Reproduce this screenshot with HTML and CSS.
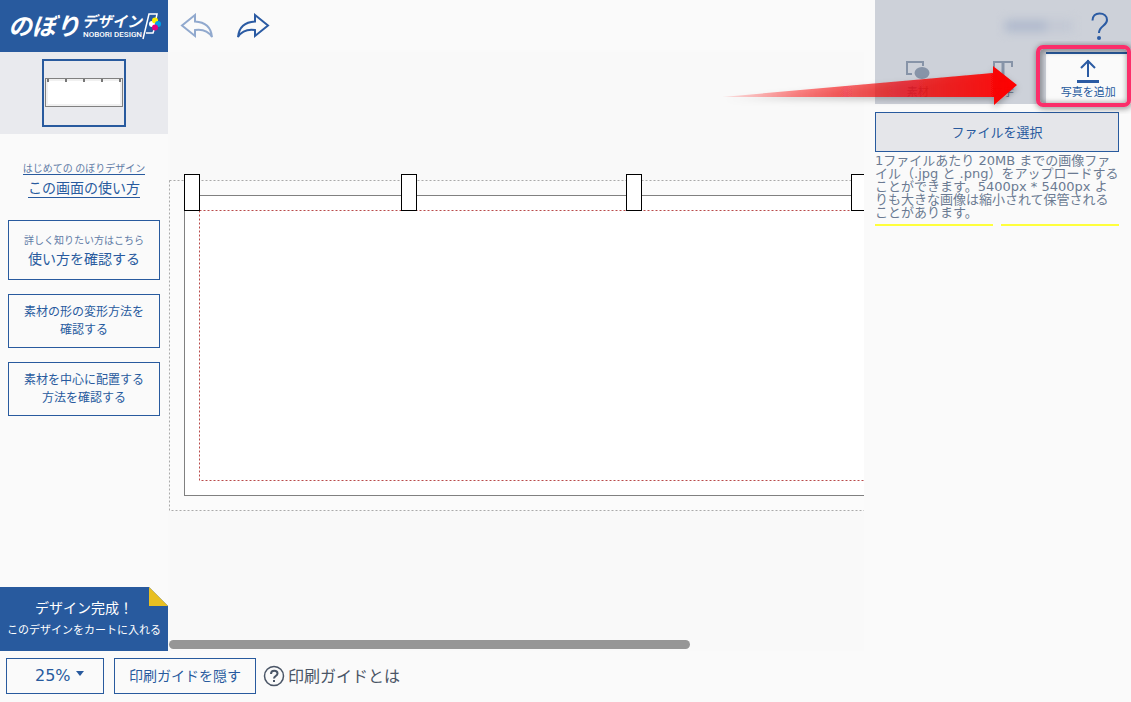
FILE: index.html
```html
<!DOCTYPE html>
<html lang="ja">
<head>
    <meta charset="UTF-8">
    <meta name="viewport" content="width=device-width, initial-scale=1.0">
    <title>のぼりデザイン</title>
    <link rel="stylesheet" href="styles.css">
</head>
<body>

    <!-- Left column -->
    <aside class="sidebar">
        <h1 class="logo">
            <span class="logo-main">のぼり</span>
            <span class="logo-side">
                <span class="logo-sub">デザイン</span>
                <span class="logo-en">NOBORI DESIGN</span>
            </span>
            <svg class="logo-flag" width="20" height="28" viewBox="0 0 20 28">
                <path d="M1 27 L7 2 H15 L14 7 M4 21 H11 L12 18" fill="none" stroke="#fff" stroke-width="1.500"/>
                <circle cx="10" cy="12" r="3" fill="#fff"/>
                <circle cx="13" cy="8.500" r="3" fill="#fff100"/>
                <circle cx="16" cy="12" r="3" fill="#00a0e9"/>
                <circle cx="13" cy="15.500" r="3" fill="#e4007f"/>
            </svg>
        </h1>

        <div class="thumb-area">
            <button class="thumb" aria-label="デザイン 1">
                <svg width="80" height="32" viewBox="0 0 80 32">
                    <rect x="1.500" y="1.500" width="77" height="28" fill="#fff" stroke="#808080"/>
                    <rect x="3" y="3" width="74" height="25" fill="none" stroke="#f0f0f0" stroke-width="2"/>
                    <path d="M4 2v3M22 2v3M40 2v3M58 2v3M76 2v3" stroke="#777" stroke-width="2"/>
                </svg>
            </button>
        </div>

        <a class="guide-link" href="#">
            <span class="small">はじめての のぼりデザイン</span>
            <span class="large">この画面の使い方</span>
        </a>

        <nav class="help-links">
            <a class="help-box" href="#">
                <span class="small">詳しく知りたい方はこちら</span>
                <span class="large">使い方を確認する</span>
            </a>
            <a class="help-box" href="#">素材の形の変形方法を<br>確認する</a>
            <a class="help-box" href="#">素材を中心に配置する<br>方法を確認する</a>
        </nav>

        <button class="complete-button">
            <span class="complete-title">デザイン完成！</span>
            <span class="complete-note">このデザインをカートに入れる</span>
        </button>
    </aside>

    <!-- Drawing area -->
    <main class="editor">
        <div class="toolbar">
            <button class="icon-button undo" aria-label="元に戻す">
                <svg width="34" height="26" viewBox="0 0 34 26">
                    <path d="M15 2 L2 12.500 L15 23 V17 C22 16 28 17.500 32 24 C31 14 25 9 15 8.500 Z" fill="none" stroke="#2b5ba3" stroke-width="2"/>
                </svg>
            </button>
            <button class="icon-button" aria-label="やり直す">
                <svg width="34" height="26" viewBox="0 0 34 26">
                    <path d="M19 2 L32 12.500 L19 23 V17 C12 16 6 17.500 2 24 C3 14 9 9 19 8.500 Z" fill="none" stroke="#2b5ba3" stroke-width="2"/>
                </svg>
            </button>
        </div>
        <div class="canvas">
            <svg width="920" height="480" viewBox="0 0 920 480">
                <rect x="1.500" y="128.500" width="915" height="330" fill="#fbfbfb" stroke="#aaa" stroke-dasharray="2 2"/>
                <rect x="16.500" y="143.500" width="885" height="300" fill="#fff" stroke="#808080"/>
                <rect x="31.500" y="158.500" width="855" height="270" fill="none" stroke="#b94a4a" stroke-dasharray="2 2"/>
                <g fill="#fff" stroke="#000">
                    <rect x="16.500" y="122.500" width="15" height="36"/>
                    <rect x="233.500" y="122.500" width="15" height="36"/>
                    <rect x="458.500" y="122.500" width="15" height="36"/>
                    <rect x="683.500" y="122.500" width="15" height="36"/>
                </g>
            </svg>
        </div>
        <div class="scroll-track"><div class="scroll-thumb"></div></div>
    </main>

    <!-- Right column -->
    <aside class="panel">
        <header class="panel-header">
            <div class="account">
                <span class="user-name"></span>
                <a class="help-icon" href="#" aria-label="ヘルプ">
                    <svg width="18" height="30" viewBox="0 0 18 30">
                        <path d="M1.500 9.500 C1.500 5 4.500 2.500 8.500 2.500 C13 2.500 16 5 16 9 C16 15 8 14.500 8 22" fill="none" stroke="#2b5ba3" stroke-width="2"/>
                        <circle cx="8" cy="27" r="2" fill="#2b5ba3"/>
                    </svg>
                </a>
            </div>
            <div class="tabs">
                <button class="tab">
                    <svg width="24" height="22" viewBox="0 0 24 22">
                        <path d="M6 14 H1 V2 H17 V6" fill="none" stroke="#8794a8" stroke-width="2"/>
                        <ellipse cx="16" cy="13" rx="7.500" ry="6" fill="#8794a8"/>
                    </svg>
                    <span>素材</span>
                </button>
                <button class="tab">
                    <svg width="24" height="22" viewBox="0 0 24 22">
                        <path d="M3 7 V2 H21 V7 M8 21 H16" fill="none" stroke="#8794a8" stroke-width="2"/>
                        <path d="M12 2 V21" fill="none" stroke="#8794a8" stroke-width="3"/>
                    </svg>
                    <span>文字</span>
                </button>
                <button class="tab active">
                    <svg width="24" height="26" viewBox="0 0 24 26">
                        <path d="M12 19 V2 M5 10 L12 3 L19 10" fill="none" stroke="#2b5ba3" stroke-width="2"/>
                        <rect x="1" y="22" width="22" height="3" fill="#2b5ba3"/>
                    </svg>
                    <span>写真を追加</span>
                </button>
            </div>
        </header>

        <div class="upload">
            <button class="file-button">ファイルを選択</button>
            <p class="upload-note">1ファイルあたり 20MB までの画像ファイル（.jpg と .png）をアップロードすることができます。5400px * 5400px よりも大きな画像は縮小されて保管されることがあります。</p>
            <div class="photo-columns"><span></span><span></span></div>
        </div>

        <!-- Callout over the upload tab -->
        <svg class="callout" width="416" height="124" viewBox="0 0 416 124">
            <defs>
                <linearGradient id="arrow-fill" x1="0" x2="1" y1="0" y2="0">
                    <stop offset="0" stop-color="#f00" stop-opacity="0.100"/>
                    <stop offset="0.250" stop-color="#f00" stop-opacity="0.450"/>
                    <stop offset="0.600" stop-color="#e91418" stop-opacity="0.780"/>
                    <stop offset="0.900" stop-color="#f80808" stop-opacity="0.960"/>
                    <stop offset="1" stop-color="#f00"/>
                </linearGradient>
                <filter id="arrow-shadow" x="-5%" y="-20%" width="110%" height="160%">
                    <feDropShadow dx="0" dy="3" stdDeviation="3" flood-color="#000" flood-opacity="0.300"/>
                </filter>
                <filter id="frame-shadow" x="-10%" y="-10%" width="120%" height="125%">
                    <feDropShadow dx="1" dy="1" stdDeviation="3" flood-color="#000" flood-opacity="0.600"/>
                </filter>
            </defs>
            <path d="M7 97 L278 73 V66 L302 85 L279 105 V97 Z" fill="url(#arrow-fill)" filter="url(#arrow-shadow)"/>
            <rect x="323" y="47" width="91" height="58" rx="5" fill="none" stroke="#fb2d6b" stroke-width="4" filter="url(#frame-shadow)"/>
        </svg>
    </aside>

    <!-- Bottom bar -->
    <footer class="bottom-bar">
        <label class="zoom">
            <select aria-label="表示倍率">
                <option>25%</option>
                <option>50%</option>
                <option>100%</option>
            </select>
        </label>
        <button class="guide-toggle">印刷ガイドを隠す</button>
        <a class="guide-about" href="#">
            <svg width="22" height="22" viewBox="0 0 22 22">
                <circle cx="11" cy="11" r="9.500" fill="none" stroke="#4a5566" stroke-width="1.500"/>
                <path d="M8 9 C8 4.500 14.500 5 14.500 8.500 C14.500 11 11 11 11 13.500" fill="none" stroke="#4a5566" stroke-width="2"/>
                <rect x="10" y="15" width="2" height="2" fill="#4a5566"/>
            </svg>
            <span>印刷ガイドとは</span>
        </a>
    </footer>

</body>
</html>
```
FILE: styles.css
```css
/* Page grid */
* {
    box-sizing: border-box;
}

body {
    margin: 0;
    height: 100vh;
    overflow: hidden;
    display: grid;
    grid-template-columns: 168px 1fr 256px;
    grid-template-rows: 1fr 51px;
    background-color: #fafafa;
    color: #285a9e;
    font-family: "Noto Sans", "Noto Sans CJK JP", sans-serif;
}

button, select {
    font: inherit;
    color: inherit;
    border: none;
    background: none;
    padding: 0;
    cursor: pointer;
}

a {
    color: inherit;
    text-decoration: none;
}

svg {
    display: block;
    flex-shrink: 0;
}

/* Left column */
.sidebar {
    display: flex;
    flex-direction: column;
    min-height: 0;
}

.logo {
    display: flex;
    align-items: center;
    height: 52px;
    margin: 0;
    padding-left: 8px;
    background-color: #285a9e;
    color: #fff;
    font-style: italic;
    font-weight: 700;
    white-space: nowrap;
}

.logo-main {
    width: 74px;
    font-size: 24px;
    line-height: 28px;
}

.logo-side {
    display: flex;
    flex-direction: column;
    width: 60px;
    padding-top: 2px;
}

.logo-sub {
    font-size: 15px;
    line-height: 16px;
}

.logo-en {
    padding-left: 1px;
    font-family: Roboto, sans-serif;
    font-style: normal;
    font-weight: 500;
    font-size: 8px;
    line-height: 12px;
}

.thumb-area {
    display: flex;
    justify-content: center;
    align-items: center;
    height: 82px;
    background-color: #e9eaee;
}

.thumb {
    display: flex;
    justify-content: center;
    align-items: center;
    width: 84px;
    height: 68px;
    border: 2px solid #285a9e;
}

.small {
    font-size: 10px;
    line-height: 12px;
    color: #5f7ba6;
}

.large {
    font-size: 14px;
    line-height: 20px;
}

.guide-link {
    display: flex;
    flex-direction: column;
    align-items: center;
    gap: 4px;
    padding-top: 28px;
}

.guide-link span {
    border-bottom: 1px solid #285a9e;
}

.guide-link .large {
    line-height: 18px;
}

.help-links {
    display: flex;
    flex-direction: column;
    gap: 14px;
    padding: 22px 8px;
}

.help-box {
    display: block;
    padding: 8px 4px;
    border: 1px solid #285a9e;
    font-size: 12px;
    line-height: 18px;
    text-align: center;
}

.help-box span {
    display: block;
}

.help-box .small {
    padding-top: 4px;
    line-height: 14px;
}

.help-box .large {
    line-height: 24px;
}

.complete-button {
    position: relative;
    display: flex;
    flex-direction: column;
    justify-content: center;
    align-items: center;
    height: 64px;
    margin-top: auto;
    background-color: #285a9e;
    color: #fff;
    white-space: nowrap;
    clip-path: polygon(0 0, 149px 0, 100% 19px, 100% 100%, 0 100%);
}

.complete-button::after {
    content: "";
    position: absolute;
    top: 0;
    right: 0;
    width: 19px;
    height: 19px;
    background-color: #e8bf22;
}

.complete-title {
    font-size: 14px;
    line-height: 22px;
}

.complete-note {
    font-size: 11px;
    line-height: 22px;
}

/* Drawing area */
.editor {
    display: flex;
    flex-direction: column;
    min-width: 0;
    min-height: 0;
    padding-right: 11px;
}

.toolbar {
    display: flex;
    align-items: center;
    gap: 22px;
    height: 52px;
    padding-left: 12px;
}

.undo {
    opacity: 0.5;
}

.canvas {
    flex: 1;
    min-height: 0;
    overflow: hidden;
    background-color: #f9f9f9;
}

.scroll-track {
    height: 11px;
    padding-left: 1px;
    background-color: #f9f9f9;
}

.scroll-thumb {
    width: 75%;
    height: 9px;
    border-radius: 5px;
    background-color: #969696;
}

/* Right column */
.panel {
    position: relative;
    min-width: 0;
}

.panel-header {
    background-color: #cdd1d9;
}

.account {
    display: flex;
    justify-content: flex-end;
    align-items: center;
    gap: 18px;
    height: 52px;
    padding-right: 22px;
}

.user-name {
    width: 68px;
    height: 12px;
    background: linear-gradient(90deg, #b0bacd 60%, #c2c8d4 60%);
    filter: blur(5px);
}

.tabs {
    display: grid;
    grid-template-columns: repeat(3, 1fr);
    height: 52px;
}

.tab {
    display: flex;
    flex-direction: column;
    justify-content: flex-end;
    align-items: center;
    gap: 2px;
    padding-bottom: 4px;
    border-top: 2px solid transparent;
    color: #66748c;
    font-size: 11px;
    line-height: 16px;
    white-space: nowrap;
}

.tab.active {
    gap: 0;
    border-top-color: #285a9e;
    background-color: #fafafa;
    color: #285a9e;
}

.upload {
    padding: 8px 12px 0 0;
}

.file-button {
    display: block;
    width: 100%;
    height: 40px;
    padding-bottom: 2px;
    border: 1px solid #285a9e;
    background-color: #e5e6ea;
    font-size: 13px;
}

.upload-note {
    margin: 2px 0 5px;
    color: #6b7a92;
    font-family: "DejaVu Sans", "Noto Sans CJK JP", sans-serif;
    font-size: 13px;
    line-height: 13px;
}

.photo-columns {
    display: grid;
    grid-template-columns: 1fr 1fr;
    gap: 8px;
}

.photo-columns span {
    height: 2px;
    background-color: #ffff3c;
}

.callout {
    position: absolute;
    top: 0;
    right: 0;
    pointer-events: none;
}

/* Bottom bar */
.bottom-bar {
    grid-column: 1 / -1;
    display: flex;
    align-items: flex-start;
    padding: 7px 6px;
}

.zoom {
    position: relative;
    margin-right: 10px;
}

.zoom select {
    appearance: none;
    width: 98px;
    height: 36px;
    padding-left: 28px;
    padding-bottom: 2px;
    border: 1px solid #285a9e;
    font-family: "DejaVu Sans", sans-serif;
    font-size: 16px;
}

.zoom::after {
    content: "";
    position: absolute;
    top: 13px;
    right: 20px;
    border: 4px solid transparent;
    border-top: 5px solid #285a9e;
    border-bottom: none;
    pointer-events: none;
}

.guide-toggle {
    width: 142px;
    height: 36px;
    padding-bottom: 3px;
    border: 1px solid #285a9e;
    font-size: 14px;
}

.guide-about {
    display: flex;
    align-items: center;
    gap: 3px;
    height: 36px;
    margin-left: 7px;
    color: #4a5566;
    font-size: 16px;
}

.guide-about span {
    padding-bottom: 3px;
}
```
